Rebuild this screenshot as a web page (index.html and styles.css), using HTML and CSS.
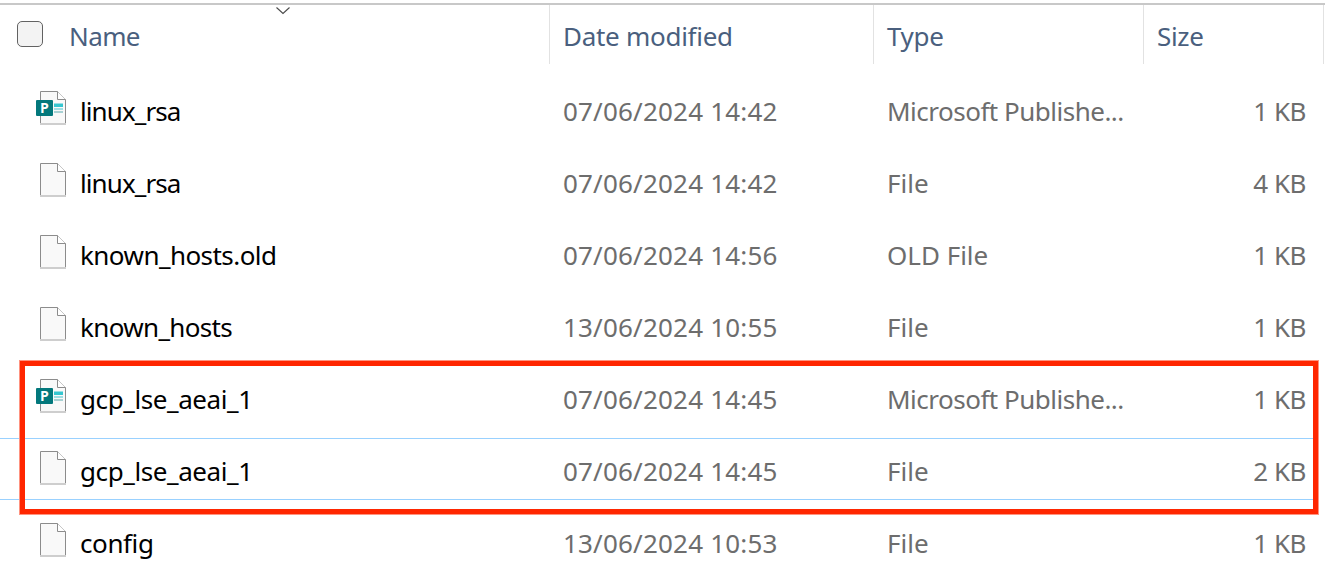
FILE: index.html
```html
<!DOCTYPE html>
<html lang="en">
<head>
<meta charset="utf-8">
<title>Files</title>
<link rel="stylesheet" href="styles.css">
</head>
<body>
<svg class="defs" aria-hidden="true">
  <symbol id="page" viewBox="0 0 32 36">
    <path d="M4.5 1.5H21.5L29.5 9.5V33.5H4.5Z" fill="#f9f9f9" stroke="#8c8c8c"/>
    <path d="M21.5 1.5V9.5H29.5" fill="#fff" stroke="#8c8c8c"/>
    <path d="M4 34H30" stroke="#cecece" stroke-width="2"/>
  </symbol>
  <symbol id="publisher" viewBox="0 0 32 36">
    <use href="#page"/>
    <path d="M18 13.500H27V17H18Z" fill="#36c6d0"/>
    <path d="M18 19H27" stroke="#7fd6dc" stroke-width="1.500"/>
    <path d="M18 22H27" stroke="#56a9ae"/>
    <rect x="0" y="10" width="17" height="16" rx="1" fill="#03787c"/>
  </symbol>
</svg>
<main class="explorer">
  <header class="grid header">
    <div class="head-name"><span class="checkbox"></span><span class="label name-label">Name</span>
      <svg class="sort" width="14" height="8" viewBox="0 0 14 8"><path d="M.5 .5L7 6.500L13.500 .5" fill="none" stroke="#4a4a4a" stroke-width="1.100"/></svg>
    </div>
    <div class="head-cell"><span class="label date-label">Date modified</span></div>
    <div class="head-cell"><span class="label type-label">Type</span></div>
    <div class="head-cell last"><span class="label size-label">Size</span></div>
  </header>
  <div class="rows">
    <div class="grid row"><div class="name"><svg class="icon" viewBox="0 0 32 36"><use href="#publisher"/><text x="8.500" y="22.500" text-anchor="middle" class="badge-letter">P</text></svg><span class="n1">linux_rsa</span></div><div class="date">07/06/2024 14:42</div><div class="type pub">Microsoft Publishe...</div><div class="size">1 KB</div></div>
    <div class="grid row"><div class="name"><svg class="icon"><use href="#page"/></svg><span class="n1">linux_rsa</span></div><div class="date">07/06/2024 14:42</div><div class="type">File</div><div class="size">4 KB</div></div>
    <div class="grid row"><div class="name"><svg class="icon"><use href="#page"/></svg><span class="n2">known_hosts.old</span></div><div class="date">07/06/2024 14:56</div><div class="type">OLD File</div><div class="size">1 KB</div></div>
    <div class="grid row"><div class="name"><svg class="icon"><use href="#page"/></svg><span class="n3">known_hosts</span></div><div class="date">13/06/2024 10:55</div><div class="type">File</div><div class="size">1 KB</div></div>
    <div class="grid row"><div class="name"><svg class="icon" viewBox="0 0 32 36"><use href="#publisher"/><text x="8.500" y="22.500" text-anchor="middle" class="badge-letter">P</text></svg><span class="n4">gcp_lse_aeai_1</span></div><div class="date">07/06/2024 14:45</div><div class="type pub">Microsoft Publishe...</div><div class="size">1 KB</div></div>
    <div class="grid row focused"><div class="name"><svg class="icon"><use href="#page"/></svg><span class="n4">gcp_lse_aeai_1</span></div><div class="date">07/06/2024 14:45</div><div class="type">File</div><div class="size">2 KB</div></div>
    <div class="grid row"><div class="name"><svg class="icon"><use href="#page"/></svg><span class="n5">config</span></div><div class="date">13/06/2024 10:53</div><div class="type">File</div><div class="size">1 KB</div></div>
  </div>
  <div class="highlight"></div>
</main>
</body>
</html>
```
FILE: styles.css
```css
*, *::after { box-sizing: border-box; }
body { margin: 0; background: #fff; }
.defs { position: absolute; width: 0; height: 0; }
.explorer {
  position: relative;
  width: 1325px;
  height: 582px;
  padding-top: 3px;
  overflow: hidden;
  font: 26px/36px "Noto Sans", "Open Sans", sans-serif;
  color: #6d6d6d;
}
.grid { display: grid; grid-template-columns: 549px 324px 270px 181px; }
.header { height: 61px; border-top: 2px solid #c8c8c8; color: #4a5f7e; width: 1325px; }
.head-name { position: relative; display: flex; padding: 16px 0 0 17px; }
.head-cell { border-left: 1px solid #e2e2e2; padding: 13px 0 0 13px; }
.last { border-right: 1px solid #e2e2e2; }
.checkbox { width: 26px; height: 26px; border: 1.500px solid #626262; border-radius: 5px; background: #f3f3f3; }
.name-label { margin: -3px 0 0 26px; letter-spacing: -.6px; }
.date-label { letter-spacing: -.28px; }
.type-label, .size-label { letter-spacing: -.35px; }
.sort { position: absolute; left: 276px; top: 2px; }
.rows { padding-top: 11px; }
.row { height: 72px; position: relative; align-items: center; }
.name { display: flex; align-items: center; padding-left: 36px; color: #000; }
.icon { width: 32px; height: 36px; margin: -6px 12px 0 0; }
.n1 { letter-spacing: -.9px; }
.n2 { letter-spacing: -.55px; }
.n3 { letter-spacing: -.65px; }
.n4 { letter-spacing: -.4px; }
.n5 { letter-spacing: -.4px; }
.date, .type { padding-left: 14px; }
.date { letter-spacing: .19px; }
.pub { letter-spacing: -.5px; }
.size { text-align: right; padding-right: 18px; letter-spacing: -.5px; }
.badge-letter { font: 700 14px "Open Sans", sans-serif; fill: #fff; letter-spacing: 0; }
.focused::after {
  content: "";
  position: absolute;
  left: 0;
  right: 10px;
  top: 3px;
  height: 62px;
  border: solid #99d1ff;
  border-width: 1px 0;
}
.highlight {
  position: absolute;
  left: 19px;
  top: 360px;
  width: 1300px;
  height: 155px;
  border: 6px solid #ff2600;
  outline: 1px solid rgba(255, 255, 255, .5);
  outline-offset: -1px;
}
```
